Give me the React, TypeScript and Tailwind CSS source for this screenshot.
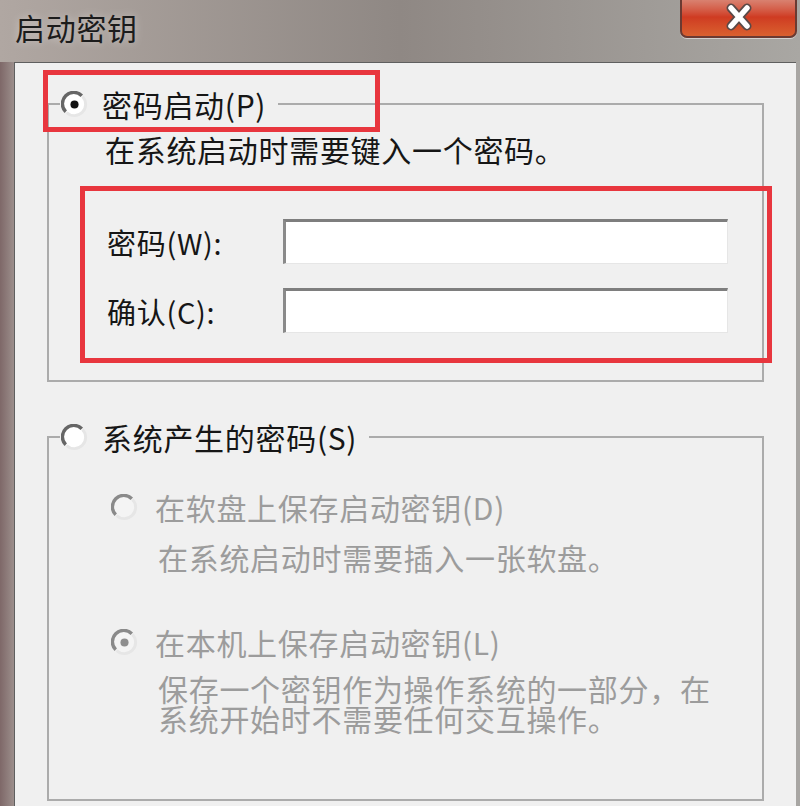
import React from 'react';

const font = "font-['Noto_Sans_CJK_SC','Liberation_Sans',sans-serif] tracking-[0.7px]";

const Radio = ({ checked = false, disabled = false }: { checked?: boolean; disabled?: boolean }) => (
  <svg width="27" height="27" viewBox="0 0 24 24" className="shrink-0">
    <circle cx="12" cy="12" r="10" fill={disabled ? '#f4f4f4' : '#ffffff'} />
    <path d="M19.07 4.93 A10 10 0 0 1 4.93 19.07" fill="none" stroke="#e6e6e6" strokeWidth="2.6" />
    <path d="M4.2 18.5 A10 10 0 0 1 18.5 4.2" fill="none" stroke={disabled ? '#8a8a8a' : '#666666'} strokeWidth="3" />
    {checked && <circle cx="12" cy="12" r="3.6" fill={disabled ? '#8e8e8e' : '#111111'} />}
  </svg>
);

const TextBox = () => (
  <div className="w-[445px] h-[45px] bg-white border-t-[3px] border-l-[3px] border-b border-r border-t-[#7e7e7e] border-l-[#8a8a8a] border-b-[#e6e6e6] border-r-[#e6e6e6]" />
);

const App = () => {
  return (
    <div className={`relative w-[800px] h-[806px] overflow-hidden flex flex-col bg-gradient-to-r from-[#b0a7a2] via-[#8f8884] to-[#a9a7a3] ${font}`}>
      {/* title bar */}
      <div className="h-[62px] shrink-0 flex justify-between items-start">
        <div className="pl-[15px] pt-[9px] text-[30px] leading-[36px] text-[#1c1c1c] [text-shadow:0_0_8px_rgba(255,255,255,0.45)]">
          启动密钥
        </div>
        <div className="mr-[3px] -mt-[2px] w-[117px] h-[40px] rounded-b-[7px] border-2 border-t-0 border-[#6b3a32] bg-gradient-to-b from-[#d98878] via-[#cf3b22] to-[#d9602f] flex items-center justify-center shadow-[0_1px_0_rgba(255,255,255,0.5)]">
          <svg width="36" height="30" viewBox="0 0 36 30">
            <path d="M10 6 L26 24 M26 6 L10 24" stroke="#5a4a48" strokeWidth="9" strokeLinecap="round" />
            <path d="M10 6 L26 24 M26 6 L10 24" stroke="#ffffff" strokeWidth="5.5" strokeLinecap="round" />
          </svg>
        </div>
      </div>

      {/* window body */}
      <div className="flex-1 flex">
        <div className="w-[14px] shrink-0 bg-gradient-to-r from-[#7e6868] to-[#9c8f8c]" />
        <div className="flex-1 bg-[#f0f0f0] border-l border-t border-[#5f5f5f] px-[32px] pt-[23px] flex flex-col">
          <fieldset className="border-2 border-[#ababab] pb-[17px]">
            <legend className="ml-[11px] pl-[1px] pr-[12px]">
              <span className="flex items-center gap-[14px] text-[30px] leading-[36px] text-[#161616]">
                <Radio checked />
                <span>密码启动(P)</span>
              </span>
            </legend>
            <div className="pl-[56px] mt-[9px] text-[30px] leading-[36px] text-[#161616]">
              在系统启动时需要键入一个密码。
            </div>
            <div className="mt-[19px] ml-[31px] -mr-[10px] border-[5px] border-[#e8363e] pl-[22px] pt-[28px] pb-[25px] flex flex-col gap-[24px]">
              <div className="flex items-center">
                <span className="w-[176px] text-[29px] leading-[36px] text-[#161616]">密码(W):</span>
                <TextBox />
              </div>
              <div className="flex items-center">
                <span className="w-[176px] text-[29px] leading-[36px] text-[#161616]">确认(C):</span>
                <TextBox />
              </div>
            </div>
          </fieldset>

          <fieldset className="mt-[37px] border-2 border-[#ababab] pb-[66px]">
            <legend className="ml-[11px] pl-[1px] pr-[12px]">
              <span className="flex items-center gap-[14px] text-[30px] leading-[36px] text-[#161616]">
                <Radio />
                <span>系统产生的密码(S)</span>
              </span>
            </legend>
            <div className="pl-[62px] text-[30px] text-[#9c9c9c]">
              <div className="mt-[34px] flex items-center gap-[17px] leading-[36px]">
                <Radio disabled />
                <span>在软盘上保存启动密钥(D)</span>
              </div>
              <div className="mt-[14px] pl-[47px] leading-[36px]">在系统启动时需要插入一张软盘。</div>
              <div className="mt-[49px] flex items-center gap-[17px] leading-[36px]">
                <Radio checked disabled />
                <span>在本机上保存启动密钥(L)</span>
              </div>
              <p className="mt-[13px] pl-[47px] leading-[30px]">
                保存一个密钥作为操作系统的一部分，在<br />系统开始时不需要任何交互操作。
              </p>
            </div>
          </fieldset>
        </div>
        <div className="w-[4px] shrink-0 bg-[#a8a6a3]" />
      </div>

      {/* annotation highlight over the first option */}
      <div className="absolute left-[43px] top-[70px] w-[337px] h-[62px] border-[5px] border-[#e8363e]" />
    </div>
  );
};

export default App;
